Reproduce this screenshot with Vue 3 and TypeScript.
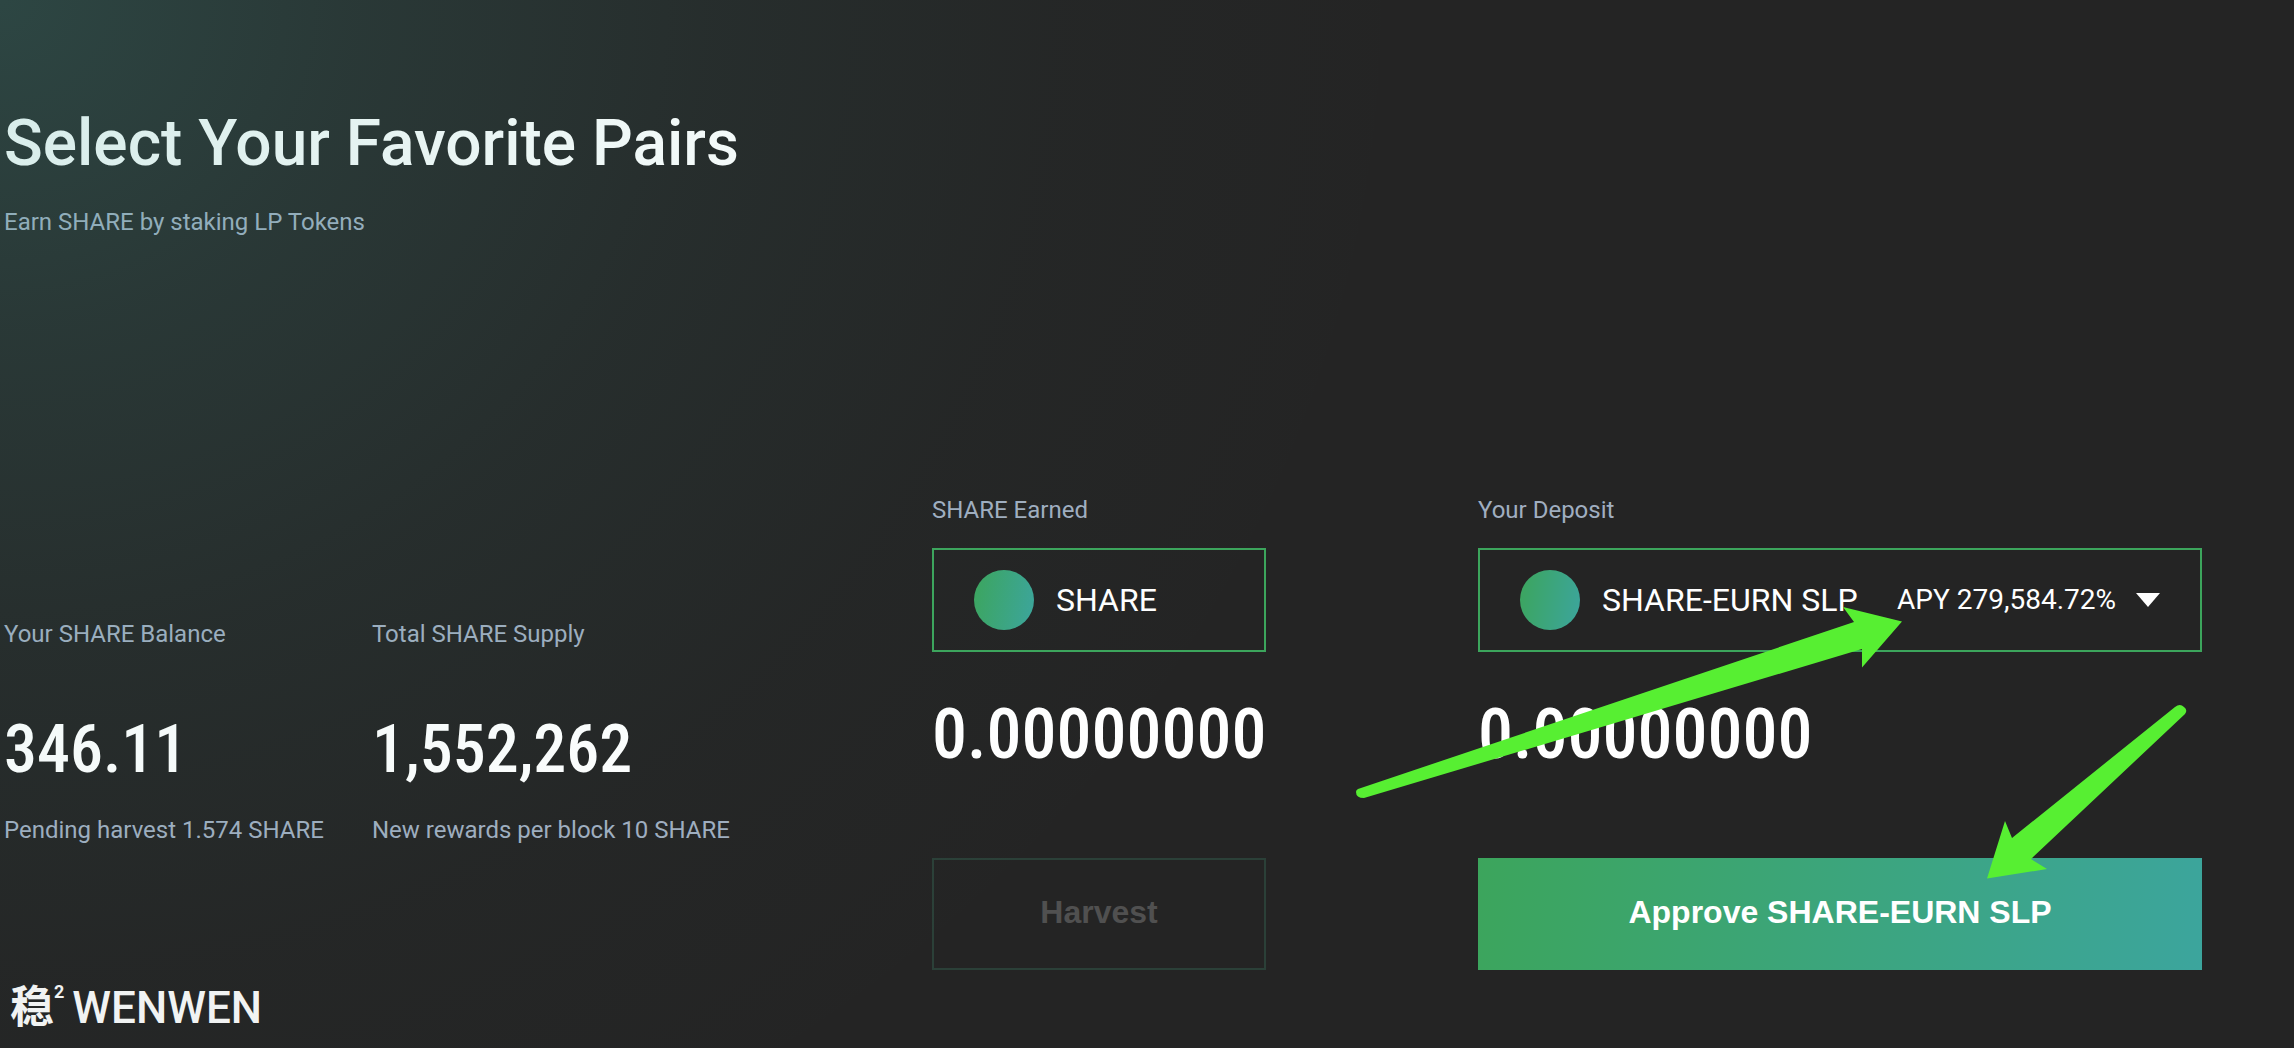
<script setup lang="ts">
import { ref } from 'vue'

interface Stat {
  label: string
  value: string
  note: string
}

const stats: Stat[] = [
  { label: 'Your SHARE Balance', value: '346.11', note: 'Pending harvest 1.574 SHARE' },
  { label: 'Total SHARE Supply', value: '1,552,262', note: 'New rewards per block 10 SHARE' },
]

const pools: string[] = ['SHARE-EURN SLP']
const pool = ref<string>(pools[0])
const apy = '279,584.72%'
const earned = '0.00000000'
const deposit = '0.00000000'
</script>

<template>
  <div class="page">
    <header class="hero">
      <h1>Select Your Favorite Pairs</h1>
      <p class="muted">Earn SHARE by staking LP Tokens</p>
    </header>

    <main class="board">
      <section class="stats">
        <div v-for="stat in stats" :key="stat.label" class="stat">
          <p class="muted">{{ stat.label }}</p>
          <p class="amount">{{ stat.value }}</p>
          <p class="muted">{{ stat.note }}</p>
        </div>
      </section>

      <section class="card">
        <p class="muted">SHARE Earned</p>
        <div class="token">
          <span class="dot"></span>
          <span class="name">SHARE</span>
        </div>
        <p class="amount">{{ earned }}</p>
        <button class="action ghost" type="button" disabled>Harvest</button>
      </section>

      <section class="card">
        <label class="muted" for="pool">Your Deposit</label>
        <div class="token">
          <span class="dot"></span>
          <select id="pool" v-model="pool" class="name">
            <option v-for="p in pools" :key="p" :value="p">{{ p }}</option>
          </select>
          <span class="apy">APY {{ apy }}</span>
          <svg class="caret" width="24" height="14" viewBox="0 0 24 14" aria-hidden="true">
            <path d="M0 0H24L12 14Z" fill="#fff" />
          </svg>
        </div>
        <p class="amount">{{ deposit }}</p>
        <button class="action solid" type="button">Approve {{ pool }}</button>

        <svg class="arrows" width="860" height="300" viewBox="0 0 860 300" aria-hidden="true">
          <path d="M12 197L508 30L497 15L556 29.5L516 75.5V57L18 206Q10 206 10 200Q10 198 12 197Z" />
          <path d="M829 115L666 246L659 229L641 286.5L701 277L685 267L839 122Q842 118 838 115Q834 111 829 115Z" />
        </svg>
      </section>
    </main>

    <footer class="brand">
      <span class="han">稳</span><span class="two">2</span><span class="word">WENWEN</span>
    </footer>
  </div>
</template>

<style>
body {
  margin: 0;
  background: #242424;
}
</style>

<style scoped>
.page {
  position: relative;
  box-sizing: border-box;
  min-height: 100vh;
  padding: 104px 92px 16px 4px;
  overflow: hidden;
  background: #242424;
  color: #fff;
  font-family: Roboto, "Liberation Sans", sans-serif;
}

/* teal glow washing over the content from the top left corner */
.page::after {
  content: "";
  position: absolute;
  inset: 0;
  pointer-events: none;
  background: radial-gradient(ellipse 62% 124% at 0 0,
    rgba(72, 172, 160, 0.25) 0%,
    rgba(72, 172, 160, 0.15) 25%,
    rgba(72, 172, 160, 0.07) 50%,
    rgba(72, 172, 160, 0.02) 75%,
    rgba(72, 172, 160, 0) 100%);
}

h1,
p {
  margin: 0;
  white-space: nowrap;
}

h1 {
  font-size: 64px;
  line-height: 76px;
  font-weight: 500;
}

.hero {
  padding-top: 2px;
}

.hero .muted {
  margin-top: 26px;
}

.muted {
  display: block;
  color: #a0aec0;
  font-size: 24px;
  line-height: 28px;
}

.board {
  display: grid;
  grid-template-columns: 716fr 334fr 724fr;
  gap: 212px;
  margin-top: 260px;
}

.stats {
  display: flex;
  gap: 48px;
  min-width: 0;
  padding-top: 124px;
}

.amount {
  font-family: "Roboto Condensed", Roboto, sans-serif;
  font-size: 70px;
  line-height: 80px;
  font-weight: 500;
}

.stat .amount {
  margin: 62px 0 26px;
  font-size: 66px;
}

.card {
  position: relative;
  display: flex;
  flex-direction: column;
  min-width: 0;
}

.token {
  display: flex;
  align-items: center;
  box-sizing: border-box;
  height: 104px;
  margin-top: 24px;
  padding: 0 40px;
  border: 2px solid #3ca55c;
}

.dot {
  flex: none;
  width: 60px;
  height: 60px;
  margin-right: 22px;
  border-radius: 50%;
  background: linear-gradient(100deg, #3ca55c, #3ca59d);
}

.name {
  font-family: inherit;
  font-size: 32px;
  line-height: 40px;
}

select.name {
  flex: 1;
  min-width: 0;
  padding: 0;
  border: 0;
  appearance: none;
  background: transparent;
  color: inherit;
}

.apy {
  font-size: 28px;
  line-height: 36px;
  white-space: nowrap;
}

.caret {
  flex: none;
  margin-left: 20px;
}

.card .amount {
  margin: 42px 0 84px;
}

.action {
  height: 112px;
  padding: 0 0 4px;
  border: 0;
  color: #fff;
  font-family: "Liberation Sans", Arial, sans-serif;
  font-size: 32px;
  font-weight: 700;
}

.ghost {
  border: 2px solid #2b4038;
  background: transparent;
  color: #505050;
}

.solid {
  background: linear-gradient(100deg, #3ca55c, #3ca59d);
}

.arrows {
  position: absolute;
  top: 96px;
  left: -132px;
  fill: #57ef32;
  pointer-events: none;
}

.brand {
  display: flex;
  align-items: flex-start;
  margin-top: 8px;
  padding-left: 6px;
  color: #f4f4f4;
}

.han {
  font-family: "Noto Sans CJK SC", sans-serif;
  font-size: 44px;
  line-height: 52px;
  font-weight: 700;
}

.two {
  font-size: 18px;
  line-height: 28px;
  font-weight: 700;
}

.word {
  margin-left: 8px;
  font-size: 44px;
  line-height: 60px;
  font-weight: 500;
}
</style>
